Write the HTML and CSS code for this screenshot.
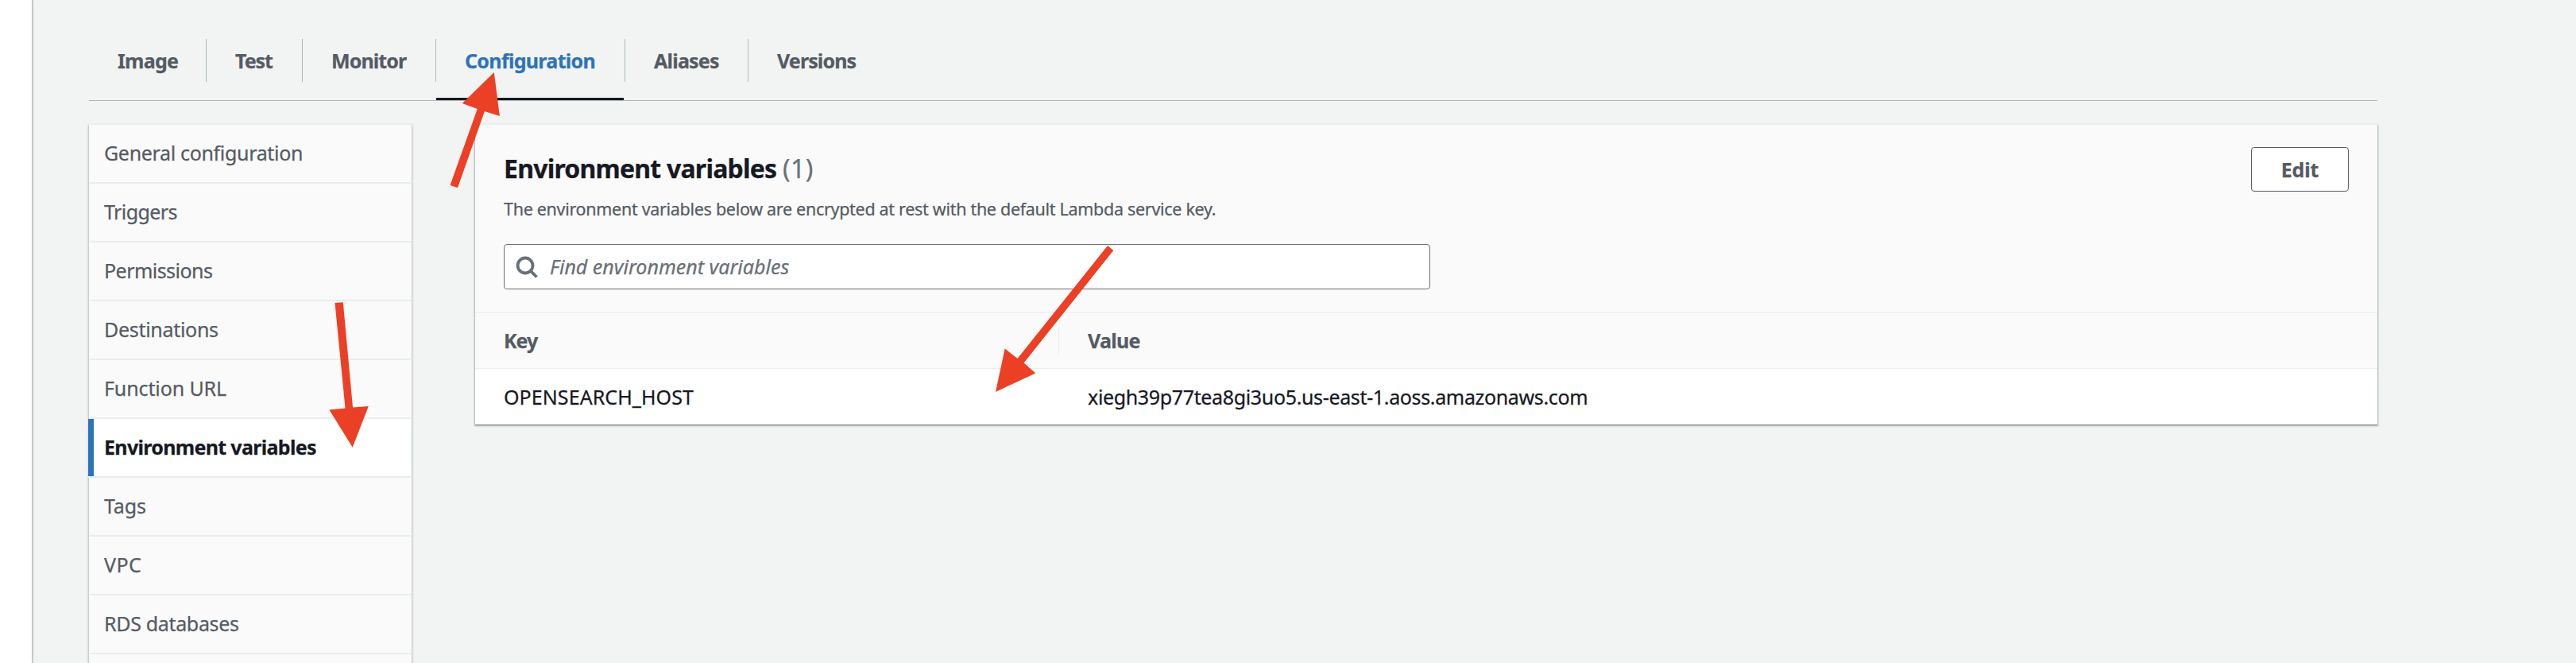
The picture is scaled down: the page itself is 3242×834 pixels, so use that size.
FILE: index.html
```html
<!DOCTYPE html>
<html lang="en">
<head>
<meta charset="utf-8">
<title>Environment variables</title>
<link rel="stylesheet" href="styles.css">
</head>
<body>
<div class="app">
  <div class="rail"></div>
  <main class="main">
    <nav class="tabs">
      <a class="tab tab-image"><span>Image</span></a>
      <a class="tab tab-test"><span>Test</span></a>
      <a class="tab tab-monitor"><span>Monitor</span></a>
      <a class="tab tab-configuration active"><span>Configuration</span></a>
      <a class="tab tab-aliases"><span>Aliases</span></a>
      <a class="tab tab-versions"><span>Versions</span></a>
    </nav>
    <div class="columns">
      <ul class="side">
        <li class="side-item general">General configuration</li>
        <li class="side-item triggers">Triggers</li>
        <li class="side-item permissions">Permissions</li>
        <li class="side-item destinations">Destinations</li>
        <li class="side-item url">Function URL</li>
        <li class="side-item current">Environment variables</li>
        <li class="side-item tags">Tags</li>
        <li class="side-item vpc">VPC</li>
        <li class="side-item rds">RDS databases</li>
      </ul>
      <section class="panel">
        <header class="panel-head">
          <div class="title-row">
            <div>
              <h2 class="title">Environment variables <span class="count">(1)</span></h2>
              <p class="desc">The environment variables below are encrypted at rest with the default Lambda service key.</p>
            </div>
            <button class="edit">Edit</button>
          </div>
          <div class="search">
            <svg class="search-icon" viewBox="0 0 28 28" fill="none" stroke="#687078" stroke-width="3.8"><circle cx="12" cy="12" r="9.5"/><path d="M18.8 18.8L26.5 26.5"/></svg>
            <span class="placeholder">Find environment variables</span>
          </div>
        </header>
        <div class="row row-head">
          <div class="cell cell-key"><span class="key-label">Key</span></div>
          <div class="cell cell-value"><span class="value-label">Value</span></div>
        </div>
        <div class="row">
          <div class="cell cell-key"><span class="env-key">OPENSEARCH_HOST</span></div>
          <div class="cell cell-value"><span class="env-value">xiegh39p77tea8gi3uo5.us-east-1.aoss.amazonaws.com</span></div>
        </div>
      </section>
    </div>
  </main>
  <svg class="arrows" viewBox="0 0 3242 834" fill="#eb4025">
    <path d="M621.8 91L581.8 130L600.8 137L566.5 233L576 236.3L609.9 140L628.9 146Z"/>
    <path d="M421.5 381L431.8 380.3L444 512.5L463.8 511L443.7 562.7L414.4 515.5L434.5 513.5Z"/>
    <path d="M1394 309L1401.3 315L1288.6 456.5L1303.3 469.5L1253 493L1264.7 438.5L1280.6 451Z"/>
  </svg>
</div>
</body>
</html>
```
FILE: styles.css
```css
* { box-sizing: border-box; }

body {
  margin: 0;
  font-family: "Noto Sans", "Open Sans", sans-serif;
  font-size: 25px;
  color: #16191f;
  background: #f2f4f4;
  -webkit-text-stroke: 0.25px;
}

.app {
  position: relative;
  display: flex;
  height: 834px;
  overflow: hidden;
}

.rail {
  width: 40px;
  flex: none;
  background: #fff;
  box-shadow: 1px 0 1px #b3bab9, 2px 0 2px #d5dbdb;
}

.main {
  width: 2880px;
  margin-left: 72px;
}

/* Tabs */
.tabs {
  display: flex;
  height: 127px;
  padding-top: 49px;
  border-bottom: 1px solid #aab7b8;
}

.tab {
  height: 77px;
  font-weight: 700;
  line-height: 54px;
  color: #545b64;
  white-space: nowrap;
}

.tab span {
  display: block;
  height: 54px;
  padding-left: 36px;
  border-right: 1px solid #aab7b8;
}

.tab-image { width: 148px; letter-spacing: -0.7px; }
.tab-test { width: 121px; letter-spacing: -1.05px; }
.tab-monitor { width: 168px; letter-spacing: -0.9px; }
.tab-configuration { width: 238px; letter-spacing: -0.68px; }
.tab-aliases { width: 155px; letter-spacing: -0.78px; }
.tab-versions { width: 180px; letter-spacing: -0.89px; }
.tab-versions span { border-right: 0; }

.tab.active {
  color: #2e73b8;
  background: linear-gradient(#16191f, #16191f) 0 100% / 236px 3px no-repeat;
}

/* Two-column body */
.columns {
  display: flex;
  align-items: flex-start;
  gap: 80px;
  padding-top: 30px;
}

.side {
  flex: none;
  width: 406px;
  height: 720px;
  margin: 0;
  padding: 0;
  list-style: none;
  background: #fafafa;
  box-shadow: 0 -1px 0 #eaeded, 0 1px 2px 1px #b4bcbc;
}

.side-item {
  height: 74px;
  padding-left: 18px;
  margin: 0 1px;
  border-bottom: 2px solid #eaeded;
  line-height: 71px;
  color: #545b64;
  white-space: nowrap;
}

.general { letter-spacing: -0.33px; }
.triggers { letter-spacing: -0.59px; }
.permissions { letter-spacing: -0.54px; }
.destinations { letter-spacing: -0.3px; }
.url { letter-spacing: -0.11px; }
.tags { letter-spacing: -0.1px; }
.vpc { letter-spacing: 0.44px; }
.rds { letter-spacing: -0.33px; }

.side-item.current {
  margin-left: -1px;
  padding-left: 20px;
  font-weight: 700;
  letter-spacing: -0.68px;
  color: #16191f;
  background: linear-gradient(#2e73b8, #2e73b8) 0 0 / 7px 72px no-repeat, #fff;
}

/* Panel */
.panel {
  width: 2394px;
  height: 377px;
  background: #fff;
  box-shadow: 0 -1px 0 #eaeded, 0 1px 1px #7b8788, 0 1px 2px 1px #b4bcbc;
}

.panel-head {
  height: 237px;
  padding: 28px 36px 0;
  background: #fafafa;
  border-bottom: 1px solid #eaeded;
}

.title-row {
  display: flex;
  justify-content: space-between;
  align-items: flex-start;
  height: 122px;
}

.title {
  margin: 0;
  font-size: 32px;
  line-height: 54px;
  letter-spacing: -0.78px;
}

.count {
  font-weight: 400;
  letter-spacing: 0.5px;
  color: #687078;
}

.desc {
  margin: 0;
  font-size: 21.5px;
  line-height: 47px;
  letter-spacing: -0.3px;
  color: #545b64;
}

.edit {
  width: 123px;
  height: 56px;
  padding: 0;
  border: 1px solid #545b64;
  border-radius: 4px;
  background: #fff;
  font: 700 25px/54px "Noto Sans", sans-serif;
  letter-spacing: -0.1px;
  color: #545b64;
}

.search {
  display: flex;
  align-items: center;
  gap: 15px;
  width: 1166px;
  height: 57px;
  padding-left: 14px;
  border: 1px solid #687078;
  border-radius: 4px;
  background: #fff;
}

.search-icon { width: 28px; height: 28px; }

.placeholder {
  font-style: italic;
  line-height: 55px;
  color: #687078;
}

.row {
  display: flex;
  align-items: center;
  height: 70px;
  padding-bottom: 1px;
}

.row-head {
  background: #fafafa;
  border-bottom: 1px solid #eaeded;
  font-weight: 700;
  color: #545b64;
}

.cell { line-height: 36px; }

.cell-key {
  width: 735px;
  padding-left: 36px;
  border-right: 1px solid transparent;
}

.row-head .cell-key { border-right-color: #eaeded; }

.cell-value { padding-left: 36px; }

.key-label { letter-spacing: -1px; }
.value-label { letter-spacing: -0.73px; }
.env-key { letter-spacing: 0.08px; }
.env-value { letter-spacing: -0.35px; }

/* Annotation arrows drawn over the page */
.arrows {
  position: absolute;
  inset: 0;
  width: 3242px;
  height: 834px;
}
```
